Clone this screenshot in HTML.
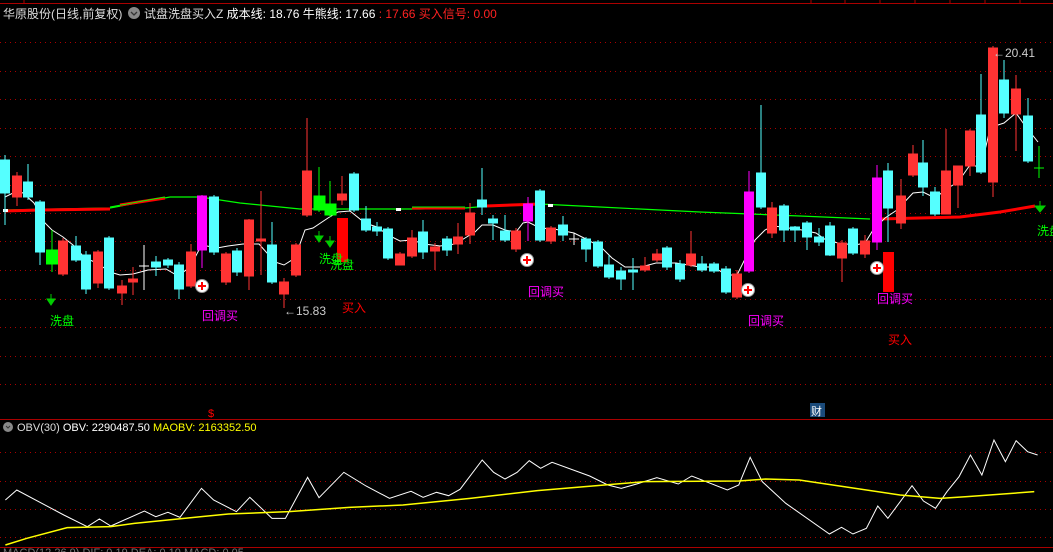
<!DOCTYPE html>
<html><head><meta charset="utf-8"><style>
html,body{margin:0;padding:0;background:#000;width:1053px;height:552px;overflow:hidden}
svg{display:block}
text{font-family:"Liberation Sans","Noto Sans CJK SC",sans-serif}
</style></head><body>
<svg width="1053" height="552" viewBox="0 0 1053 552" xmlns="http://www.w3.org/2000/svg">
<rect width="1053" height="552" fill="#000"/>
<line x1="0" y1="3.5" x2="1053" y2="3.5" stroke="#a00" stroke-width="1"/>
<g stroke="#a00"><line x1="811" y1="0" x2="811" y2="3"/><line x1="845" y1="0" x2="845" y2="3"/><line x1="880" y1="0" x2="880" y2="3"/><line x1="915" y1="0" x2="915" y2="3"/><line x1="950" y1="0" x2="950" y2="3"/><line x1="985" y1="0" x2="985" y2="3"/><line x1="1020" y1="0" x2="1020" y2="3"/><line x1="24" y1="0" x2="24" y2="3"/></g>
<line x1="0" y1="419.5" x2="1053" y2="419.5" stroke="#a00"/>
<line x1="0" y1="547.5" x2="1053" y2="547.5" stroke="#a00"/>
<g stroke="#a00" stroke-dasharray="1,4" stroke-width="1">
<line x1="0" y1="42.5" x2="1053" y2="42.5"/><line x1="0" y1="71.5" x2="1053" y2="71.5"/><line x1="0" y1="99.5" x2="1053" y2="99.5"/><line x1="0" y1="128.5" x2="1053" y2="128.5"/><line x1="0" y1="156.5" x2="1053" y2="156.5"/><line x1="0" y1="185.5" x2="1053" y2="185.5"/><line x1="0" y1="213.5" x2="1053" y2="213.5"/><line x1="0" y1="241.5" x2="1053" y2="241.5"/><line x1="0" y1="270.5" x2="1053" y2="270.5"/><line x1="0" y1="299.5" x2="1053" y2="299.5"/><line x1="0" y1="327.5" x2="1053" y2="327.5"/><line x1="0" y1="356.5" x2="1053" y2="356.5"/><line x1="0" y1="384.5" x2="1053" y2="384.5"/>
<line x1="0" y1="452.5" x2="1053" y2="452.5"/><line x1="0" y1="481.5" x2="1053" y2="481.5"/><line x1="0" y1="509.5" x2="1053" y2="509.5"/><line x1="0" y1="537.5" x2="1053" y2="537.5"/>
</g>
<polyline points="5,210 110,208 170,197 200,197 240,203 300,209 420,209 465,208 490,206 540,204 600,207 700,212 800,216 870,219" fill="none" stroke="#0f0" stroke-width="1.2"/>
<g stroke="#f00" stroke-width="3" fill="none">
<polyline points="5,211 40,210 110,209"/><polyline points="120,205 165,198"/><polyline points="412,208 465,208"/><polyline points="486,206 540,204"/>
<polyline points="880,219 960,217 1000,212 1035,206"/>
</g>
<g stroke="#0f0" stroke-width="1"><line x1="110" y1="207" x2="165" y2="197"/><line x1="412" y1="207" x2="465" y2="207"/></g>
<g fill="#fff"><rect x="3" y="209" width="5" height="3"/><rect x="396" y="208" width="5" height="3"/><rect x="548" y="204" width="5" height="3"/></g>
<polyline fill="none" stroke="#fff" stroke-width="1" points="5,197 17,191 23,193 34,203 45,223 52,230 63,237 73,245 85,258 97,263 110,272 120,275 133,274 148,270 166,269 178,276 190,267 200,248 207,246 217,248 228,246 243,244 259,244 275,262 284,265 295,258 305,230 313,228 328,218 338,212 350,211 365,223 377,227 388,235 400,241 412,240 424,244 440,246 455,244 465,238 475,232 482,225 493,225 505,230 516,232 523,223 528,222 540,228 554,229 574,233 588,240 602,248 612,258 625,267 641,267 656,263 676,263 700,267 714,267 726,275 737,275 746,257 755,240 765,230 773,226 782,227 802,230 816,233 826,240 838,243 855,245 865,243 873,230 885,218 897,210 913,193 923,192 935,198 948,188 958,182 970,165 981,167 991,125 998,125 1004,123 1016,113 1026,127 1038,142"/>
<g stroke="#55ffff" fill="#55ffff">
<line x1="5" y1="155" x2="5" y2="225"/><rect x="0.5" y="160" width="9" height="33"/>
<line x1="28" y1="164" x2="28" y2="200"/><rect x="23.5" y="182" width="9" height="15"/>
<line x1="40" y1="200" x2="40" y2="265"/><rect x="35.5" y="202" width="9" height="50"/>
<line x1="76" y1="236" x2="76" y2="262"/><rect x="71.5" y="246" width="9" height="14"/>
<line x1="86" y1="251" x2="86" y2="294"/><rect x="81.5" y="255" width="9" height="34"/>
<line x1="109" y1="236" x2="109" y2="290"/><rect x="104.5" y="238" width="9" height="50"/>
<line x1="156" y1="256" x2="156" y2="276"/><rect x="151.5" y="262" width="9" height="5"/>
<line x1="168" y1="258" x2="168" y2="268"/><rect x="163.5" y="260" width="9" height="5"/>
<line x1="179" y1="262" x2="179" y2="299"/><rect x="174.5" y="265" width="9" height="24"/>
<line x1="214" y1="195" x2="214" y2="255"/><rect x="209.5" y="197" width="9" height="55"/>
<line x1="237" y1="248" x2="237" y2="276"/><rect x="232.5" y="251" width="9" height="21"/>
<line x1="272" y1="222" x2="272" y2="284"/><rect x="267.5" y="245" width="9" height="37"/>
<line x1="354" y1="172" x2="354" y2="212"/><rect x="349.5" y="174" width="9" height="36"/>
<line x1="366" y1="206" x2="366" y2="232"/><rect x="361.5" y="219" width="9" height="11"/>
<line x1="377" y1="222" x2="377" y2="236"/><rect x="372.5" y="227" width="9" height="4"/>
<line x1="388" y1="227" x2="388" y2="260"/><rect x="383.5" y="229" width="9" height="29"/>
<line x1="423" y1="220" x2="423" y2="259"/><rect x="418.5" y="232" width="9" height="20"/>
<line x1="447" y1="236" x2="447" y2="256"/><rect x="442.5" y="239" width="9" height="11"/>
<line x1="482" y1="168" x2="482" y2="215"/><rect x="477.5" y="200" width="9" height="7"/>
<line x1="493" y1="215" x2="493" y2="240"/><rect x="488.5" y="219" width="9" height="4"/>
<line x1="505" y1="215" x2="505" y2="242"/><rect x="500.5" y="231" width="9" height="9"/>
<line x1="540" y1="189" x2="540" y2="242"/><rect x="535.5" y="191" width="9" height="49"/>
<line x1="563" y1="216" x2="563" y2="241"/><rect x="558.5" y="225" width="9" height="10"/>
<line x1="586" y1="237" x2="586" y2="262"/><rect x="581.5" y="239" width="9" height="10"/>
<line x1="598" y1="240" x2="598" y2="268"/><rect x="593.5" y="242" width="9" height="24"/>
<line x1="609" y1="255" x2="609" y2="279"/><rect x="604.5" y="265" width="9" height="12"/>
<line x1="621" y1="267" x2="621" y2="290"/><rect x="616.5" y="271" width="9" height="8"/>
<line x1="633" y1="258" x2="633" y2="290"/><rect x="628.5" y="270" width="9" height="2"/>
<line x1="667" y1="246" x2="667" y2="270"/><rect x="662.5" y="248" width="9" height="19"/>
<line x1="680" y1="260" x2="680" y2="282"/><rect x="675.5" y="264" width="9" height="15"/>
<line x1="702" y1="256" x2="702" y2="272"/><rect x="697.5" y="264" width="9" height="6"/>
<line x1="714" y1="262" x2="714" y2="273"/><rect x="709.5" y="264" width="9" height="7"/>
<line x1="726" y1="266" x2="726" y2="294"/><rect x="721.5" y="269" width="9" height="23"/>
<line x1="761" y1="105" x2="761" y2="209"/><rect x="756.5" y="173" width="9" height="34"/>
<line x1="784" y1="204" x2="784" y2="242"/><rect x="779.5" y="206" width="9" height="24"/>
<line x1="795" y1="226" x2="795" y2="242"/><rect x="790.5" y="227" width="9" height="3"/>
<line x1="807" y1="221" x2="807" y2="250"/><rect x="802.5" y="223" width="9" height="14"/>
<line x1="819" y1="228" x2="819" y2="246"/><rect x="814.5" y="237" width="9" height="5"/>
<line x1="830" y1="222" x2="830" y2="256"/><rect x="825.5" y="226" width="9" height="29"/>
<line x1="853" y1="227" x2="853" y2="255"/><rect x="848.5" y="229" width="9" height="24"/>
<line x1="888" y1="163" x2="888" y2="242"/><rect x="883.5" y="171" width="9" height="37"/>
<line x1="923" y1="140" x2="923" y2="196"/><rect x="918.5" y="163" width="9" height="24"/>
<line x1="935" y1="187" x2="935" y2="216"/><rect x="930.5" y="192" width="9" height="22"/>
<line x1="981" y1="74" x2="981" y2="174"/><rect x="976.5" y="115" width="9" height="57"/>
<line x1="1004" y1="60" x2="1004" y2="118"/><rect x="999.5" y="80" width="9" height="33"/>
<line x1="1028" y1="98" x2="1028" y2="163"/><rect x="1023.5" y="116" width="9" height="45"/>
</g>
<g stroke="#ff3333" fill="#ff3333">
<line x1="17" y1="172" x2="17" y2="206"/><rect x="12.5" y="176" width="9" height="21"/>
<line x1="63" y1="238" x2="63" y2="276"/><rect x="58.5" y="241" width="9" height="33"/>
<line x1="98" y1="250" x2="98" y2="288"/><rect x="93.5" y="252" width="9" height="31"/>
<line x1="122" y1="280" x2="122" y2="305"/><rect x="117.5" y="286" width="9" height="7"/>
<line x1="133" y1="267" x2="133" y2="295"/><rect x="128.5" y="279" width="9" height="3"/>
<line x1="191" y1="244" x2="191" y2="288"/><rect x="186.5" y="252" width="9" height="34"/>
<line x1="226" y1="252" x2="226" y2="285"/><rect x="221.5" y="254" width="9" height="28"/>
<line x1="249" y1="219" x2="249" y2="290"/><rect x="244.5" y="220" width="9" height="56"/>
<line x1="261" y1="191" x2="261" y2="275"/><rect x="256.5" y="239" width="9" height="2"/>
<line x1="284" y1="278" x2="284" y2="308"/><rect x="279.5" y="282" width="9" height="12"/>
<line x1="296" y1="243" x2="296" y2="277"/><rect x="291.5" y="245" width="9" height="30"/>
<line x1="307" y1="118" x2="307" y2="217"/><rect x="302.5" y="171" width="9" height="44"/>
<line x1="342" y1="176" x2="342" y2="205"/><rect x="337.5" y="194" width="9" height="6"/>
<line x1="400" y1="252" x2="400" y2="265"/><rect x="395.5" y="254" width="9" height="11"/>
<line x1="412" y1="230" x2="412" y2="258"/><rect x="407.5" y="238" width="9" height="18"/>
<line x1="435" y1="243" x2="435" y2="270"/><rect x="430.5" y="247" width="9" height="4"/>
<line x1="458" y1="223" x2="458" y2="254"/><rect x="453.5" y="237" width="9" height="7"/>
<line x1="470" y1="203" x2="470" y2="244"/><rect x="465.5" y="213" width="9" height="22"/>
<line x1="516" y1="228" x2="516" y2="252"/><rect x="511.5" y="231" width="9" height="18"/>
<line x1="551" y1="226" x2="551" y2="244"/><rect x="546.5" y="228" width="9" height="13"/>
<line x1="645" y1="257" x2="645" y2="272"/><rect x="640.5" y="266" width="9" height="4"/>
<line x1="657" y1="249" x2="657" y2="262"/><rect x="652.5" y="254" width="9" height="6"/>
<line x1="691" y1="231" x2="691" y2="267"/><rect x="686.5" y="254" width="9" height="11"/>
<line x1="737" y1="270" x2="737" y2="299"/><rect x="732.5" y="274" width="9" height="23"/>
<line x1="772" y1="202" x2="772" y2="238"/><rect x="767.5" y="208" width="9" height="25"/>
<line x1="842" y1="240" x2="842" y2="282"/><rect x="837.5" y="243" width="9" height="15"/>
<line x1="865" y1="235" x2="865" y2="258"/><rect x="860.5" y="241" width="9" height="13"/>
<line x1="901" y1="179" x2="901" y2="229"/><rect x="896.5" y="196" width="9" height="27"/>
<line x1="913" y1="145" x2="913" y2="177"/><rect x="908.5" y="154" width="9" height="21"/>
<line x1="946" y1="129" x2="946" y2="214"/><rect x="941.5" y="171" width="9" height="43"/>
<line x1="958" y1="166" x2="958" y2="208"/><rect x="953.5" y="166" width="9" height="19"/>
<line x1="970" y1="129" x2="970" y2="176"/><rect x="965.5" y="131" width="9" height="35"/>
<line x1="993" y1="46" x2="993" y2="197"/><rect x="988.5" y="48" width="9" height="134"/>
<line x1="1016" y1="75" x2="1016" y2="151"/><rect x="1011.5" y="89" width="9" height="25"/>
</g>
<g stroke="#ff00ff" fill="#ff00ff">
<line x1="202" y1="195" x2="202" y2="268"/><rect x="197.5" y="196" width="9" height="54"/>
<line x1="528" y1="197" x2="528" y2="241"/><rect x="523.5" y="204" width="9" height="17"/>
<line x1="749" y1="171" x2="749" y2="273"/><rect x="744.5" y="192" width="9" height="79"/>
<line x1="877" y1="165" x2="877" y2="250"/><rect x="872.5" y="178" width="9" height="64"/>
</g>
<g stroke="#00ff00" fill="#00ff00">
<line x1="52" y1="230" x2="52" y2="272"/><rect x="46.5" y="250" width="11" height="14"/>
<line x1="319" y1="167" x2="319" y2="212"/><rect x="314" y="196" width="11" height="14"/>
<line x1="330" y1="181" x2="330" y2="217"/><rect x="325" y="204" width="11" height="11"/>
<line x1="1039" y1="146" x2="1039" y2="178"/><line x1="1034" y1="168" x2="1044" y2="168"/>
</g>
<g stroke="#fff"><line x1="144" y1="245" x2="144" y2="290"/><line x1="139" y1="266" x2="149" y2="266"/>
<line x1="574" y1="233" x2="574" y2="245"/><line x1="569" y1="239" x2="579" y2="239"/></g>
<rect x="337" y="218" width="11" height="44" fill="#f00"/>
<rect x="883" y="252" width="11" height="40" fill="#f00"/>
<circle cx="202" cy="286" r="6.5" fill="#fff" stroke="#999"/><path d="M198 286h8M202 282v8" stroke="#f00" stroke-width="2"/>
<circle cx="527" cy="260" r="6.5" fill="#fff" stroke="#999"/><path d="M523 260h8M527 256v8" stroke="#f00" stroke-width="2"/>
<circle cx="748" cy="290" r="6.5" fill="#fff" stroke="#999"/><path d="M744 290h8M748 286v8" stroke="#f00" stroke-width="2"/>
<circle cx="877" cy="268" r="6.5" fill="#fff" stroke="#999"/><path d="M873 268h8M877 264v8" stroke="#f00" stroke-width="2"/>
<g stroke="#0c0" fill="#0c0">
<line x1="51" y1="294" x2="51" y2="302"/><path d="M47 299L51 305L55 299Z"/>
<line x1="319" y1="231" x2="319" y2="239"/><path d="M315 236L319 242L323 236Z"/>
<line x1="330" y1="236" x2="330" y2="244"/><path d="M326 241L330 247L334 241Z"/>
<line x1="1040" y1="201" x2="1040" y2="209"/><path d="M1035 206L1040 212L1045 206Z"/>
</g>
<g font-size="12">
<text x="50" y="325" fill="#0f0">洗盘</text>
<text x="319" y="263" fill="#0f0">洗盘</text>
<text x="330" y="269" fill="#0f0">洗盘</text>
<text x="1037" y="235" fill="#0f0">洗盘</text>
<text x="202" y="320" fill="#f0f">回调买</text>
<text x="528" y="296" fill="#f0f">回调买</text>
<text x="748" y="325" fill="#f0f">回调买</text>
<text x="877" y="303" fill="#f0f">回调买</text>
<text x="342" y="312" fill="#f00">买入</text>
<text x="888" y="344" fill="#f00">买入</text>
<text x="284" y="315" fill="#ccc">←15.83</text>
<text x="993" y="57" fill="#ccc">←20.41</text>
</g>
<text x="208" y="417" font-size="11" fill="#f00">$</text>
<rect x="810" y="403" width="15" height="14" fill="#1a4a7a"/><text x="811" y="415" font-size="11" fill="#fff">财</text>
<text x="3" y="18" font-size="12" fill="#ddd">华原股份(日线,前复权)</text>
<circle cx="134" cy="13" r="6" fill="#888"/><path d="M131 12l3 3 3-3" stroke="#333" fill="none" stroke-width="1.3"/>
<text x="144" y="18" font-size="12" fill="#ddd">试盘洗盘买入Z <tspan fill="#fff">成本线: 18.76 牛熊线: 17.66</tspan> <tspan fill="#f22">: 17.66 买入信号: 0.00</tspan></text>
<circle cx="8" cy="427" r="5" fill="#888"/><path d="M6 426l2 2 2-2" stroke="#333" fill="none"/>
<text x="17" y="431" font-size="11" fill="#ddd">OBV(30) <tspan fill="#fff">OBV: 2290487.50</tspan> <tspan fill="#ff0">MAOBV: 2163352.50</tspan></text>
<g transform="translate(0,400) scale(0.6716,0.33333)">
<polyline fill="none" stroke="#fff" stroke-width="1" vector-effect="non-scaling-stroke" points="8,300 25,270 95,345 130,380 148,357 165,378 215,333 232,350 250,337 268,352 300,265 318,300 352,335 372,292 405,355 425,355 458,232 475,293 512,217 545,258 580,295 612,274 630,292 650,277 668,287 685,268 718,180 735,217 752,237 770,217 788,182 805,205 822,187 878,228 905,255 925,265 948,252 978,233 1010,252 1030,228 1083,270 1100,255 1117,172 1135,245 1170,310 1235,402 1253,382 1270,402 1290,385 1307,318 1322,355 1358,257 1375,303 1393,325 1410,275 1428,230 1445,165 1462,225 1480,120 1497,185 1513,122 1530,155 1545,165"/>
<polyline fill="none" stroke="#ff0" stroke-width="1.5" vector-effect="non-scaling-stroke" points="8,435 40,415 100,383 165,380 200,370 300,350 340,342 430,335 520,322 600,315 700,295 800,272 900,255 960,245 1100,243 1140,237 1190,240 1240,255 1340,285 1400,295 1440,290 1540,275"/>
</g>
<text x="3" y="556" font-size="11" fill="#777">MACD(12,26,9) DIF: 0.19 DEA: 0.10 MACD: 0.05</text>
</svg>
</body></html>
